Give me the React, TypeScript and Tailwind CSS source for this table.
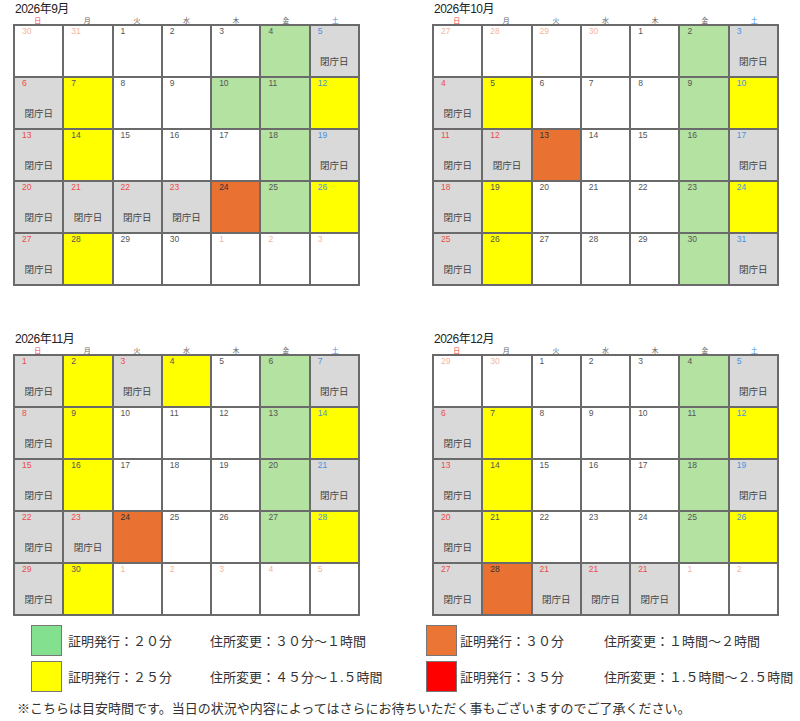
const FONT = '"Liberation Sans", "Noto Sans CJK JP", sans-serif';
const JP = '"Noto Sans CJK JP", "Liberation Sans", sans-serif';

type Month = { title: string; rows: string[] };

const months: Month[] = [
  {
    title: "2026年9月",
    rows: [
      "30x 31x 1 2 3 4g 5bc",
      "6rc 7y 8 9 10g 11g 12by",
      "13rc 14y 15 16 17 18g 19bc",
      "20rc 21rc 22rc 23rc 24o 25g 26by",
      "27rc 28y 29 30 1x 2x 3x",
    ],
  },
  {
    title: "2026年10月",
    rows: [
      "27x 28x 29x 30x 1 2g 3bc",
      "4rc 5y 6 7 8 9g 10by",
      "11rc 12rc 13o 14 15 16g 17bc",
      "18rc 19y 20 21 22 23g 24by",
      "25rc 26y 27 28 29 30g 31bc",
    ],
  },
  {
    title: "2026年11月",
    rows: [
      "1rc 2y 3rc 4y 5 6g 7bc",
      "8rc 9y 10 11 12 13g 14by",
      "15rc 16y 17 18 19 20g 21bc",
      "22rc 23rc 24o 25 26 27g 28by",
      "29rc 30y 1x 2x 3x 4x 5x",
    ],
  },
  {
    title: "2026年12月",
    rows: [
      "29x 30x 1 2 3 4g 5bc",
      "6rc 7y 8 9 10 11g 12by",
      "13rc 14y 15 16 17 18g 19bc",
      "20rc 21y 22 23 24 25g 26by",
      "27rc 28o 21rc 21rc 21rc 1x 2x",
    ],
  },
];

const bgClass: Record<string, string> = {
  w: "bg-white",
  g: "bg-[#b3e2a1]",
  y: "bg-[#ffff00]",
  o: "bg-[#e97132]",
  c: "bg-[#d9d9d9]",
};

const toneClass: Record<string, string> = {
  n: "text-[#555555]",
  r: "text-[#ee4b4b]",
  b: "text-[#4a90e2]",
  x: "text-[#f6b49a]",
};

const weekdays = ["日", "月", "火", "水", "木", "金", "土"];

function Calendar({ month }: { month: Month }) {
  const cells = month.rows.flatMap((row) =>
    row.split(" ").map((token) => {
      const m = token.match(/^(\d+)([xrb]?)([gyoc]?)$/)!;
      return { num: m[1], tone: m[2] || "n", bg: m[3] || "w" };
    })
  );

  return (
    <div className="w-[347px]">
      <div
        className="h-[14px] pl-[2px] text-[12px] leading-[14px] tracking-[-0.5px] text-[#222222]"
        style={{ fontFamily: FONT }}
      >
        {month.title}
      </div>
      <div className="grid h-[8px] grid-cols-7 text-center text-[7px] leading-[8px]" style={{ fontFamily: JP }}>
        {weekdays.map((d, i) => (
          <span
            key={d}
            className={i === 0 ? "text-[#ee4b4b]" : i === 6 ? "text-[#4a90e2]" : "text-[#666666]"}
          >
            {d}
          </span>
        ))}
      </div>
      <div className="grid grid-cols-7 border-l-2 border-t-2 border-[#6a6a6a]">
        {cells.map((c, i) => (
          <div
            key={i}
            className={`h-[52px] border-b-2 border-r-2 border-[#6a6a6a] ${bgClass[c.bg]}`}
          >
            <div
              className={`h-[10px] pl-[7px] text-[8.5px] leading-[10px] ${
                c.bg === "o" && c.tone === "n" ? "text-[#333333]" : toneClass[c.tone]
              }`}
              style={{ fontFamily: FONT }}
            >
              {c.num}
            </div>
            {c.bg === "c" && (
              <div
                className="mt-[19px] text-center text-[9.5px] leading-[12px] text-[#444444]"
                style={{ fontFamily: JP }}
              >
                閉庁日
              </div>
            )}
          </div>
        ))}
      </div>
    </div>
  );
}

function LegendRow({
  color,
  gap,
  first,
  second,
  firstWidth,
}: {
  color: string;
  gap: string;
  first: string;
  second: string;
  firstWidth: string;
}) {
  return (
    <div className="flex h-[31px] items-center">
      <div className={`h-[31px] w-[31px] border border-[#777777] ${color}`} />
      <span className={`${gap} ${firstWidth}`}>{first}</span>
      <span>{second}</span>
    </div>
  );
}

export default function App() {
  return (
    <div className="h-[721px] w-[800px] overflow-hidden bg-white">
      <div className="mt-[2px] flex pl-[13px]">
        <Calendar month={months[0]} />
        <div className="ml-[72px]">
          <Calendar month={months[1]} />
        </div>
      </div>
      <div className="mt-[46px] flex pl-[13px]">
        <Calendar month={months[2]} />
        <div className="ml-[72px]">
          <Calendar month={months[3]} />
        </div>
      </div>

      <div className="mt-[9px] flex text-[13px] text-[#333333]" style={{ fontFamily: JP }}>
        <div className="ml-[31px] flex w-[395px] flex-col gap-[5px]">
          <LegendRow
            color="bg-[#82e08f]"
            gap="ml-[6px]"
            firstWidth="w-[142px]"
            first="証明発行：２０分"
            second="住所変更：３０分～１時間"
          />
          <LegendRow
            color="bg-[#ffff00]"
            gap="ml-[6px]"
            firstWidth="w-[142px]"
            first="証明発行：２５分"
            second="住所変更：４５分～１.５時間"
          />
        </div>
        <div className="flex flex-col gap-[5px]">
          <LegendRow
            color="bg-[#ea7534]"
            gap="ml-[3px]"
            firstWidth="w-[144px]"
            first="証明発行：３０分"
            second="住所変更：１時間～２時間"
          />
          <LegendRow
            color="bg-[#ff0000]"
            gap="ml-[3px]"
            firstWidth="w-[144px]"
            first="証明発行：３５分"
            second="住所変更：１.５時間～２.５時間"
          />
        </div>
      </div>

      <p
        className="mt-[8px] pl-[17px] text-[13px] leading-[16px] text-[#333333]"
        style={{ fontFamily: JP }}
      >
        ※こちらは目安時間です。当日の状況や内容によってはさらにお待ちいただく事もございますのでご了承ください。
      </p>
    </div>
  );
}
